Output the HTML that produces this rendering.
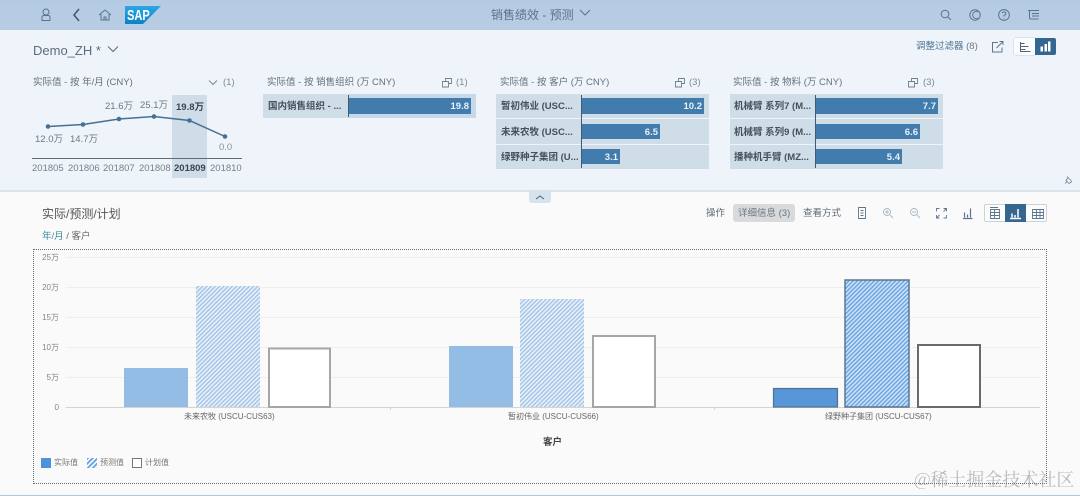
<!DOCTYPE html>
<html><head><meta charset="utf-8">
<style>
html,body{margin:0;padding:0}
body{width:1080px;height:496px;overflow:hidden;position:relative;background:#fafafa;font-family:"Liberation Sans","Noto Sans CJK SC",sans-serif;color:#555;filter:blur(.3px)}
.a{position:absolute;white-space:nowrap;line-height:1}
.r{position:absolute;}
.lbl{position:absolute;font-size:9.5px;font-weight:bold;color:#45505b;white-space:nowrap;line-height:12px}
.val{position:absolute;font-size:9.5px;font-weight:bold;color:#e8f0f8;line-height:12px;text-align:right}
.bar{position:absolute;background:#427cac}
.row{position:absolute;background:#cfdde9}
.t{position:absolute;font-size:9.5px;color:#66717c;white-space:nowrap;line-height:12px}
.yl{position:absolute;font-size:8px;color:#858585;text-align:right;width:26px;left:33px;line-height:10px}
svg{position:absolute;overflow:visible}
</style></head><body>

<!-- shell header -->
<div class="r" style="left:0;top:0;width:1080px;height:30px;background:linear-gradient(#b5cbe4,#b8cde3)"></div>
<svg style="left:0;top:0" width="1080" height="30" fill="none" stroke="#5a7391" stroke-width="1">
  <circle cx="46" cy="12" r="3"/><path d="M42 20.500v-3q0-2 2-2h4q2 0 2 2v3z"/>
  <path d="M79 9l-5 6 5 6" stroke-width="1.500" stroke="#40566e"/>
  <path d="M99 15l6-5 6 5M101 14v6h8v-6M104 20v-3h2v3"/>
  <path d="M580 10l5 5 5-5"/>
  <circle cx="945" cy="14" r="3.800"/><path d="M948 17l3 3"/>
  <circle cx="975" cy="15" r="5.200"/><path d="M978 12a3.500 3.500 0 1 0 0 6"/>
  <circle cx="1004" cy="15" r="5.400"/><path d="M1002 13q2-2 3.500-.500t-1.500 3v1M1004 18.500v.8"/>
  <path d="M1028 10.500h11M1029.500 10.500v8.500M1032 13.500h7M1032 16h7M1029.500 19h9"/>
</svg>
<svg style="left:125px;top:6px" width="37" height="19"><defs><linearGradient id="sg" x1="0" y1="0" x2="0" y2="1"><stop offset="0" stop-color="#2aa7e4"/><stop offset="1" stop-color="#0a82c8"/></linearGradient></defs><path d="M0 0H36L18 18H0z" fill="url(#sg)"/></svg>
<div class="a" style="left:127px;top:8px;font-size:15px;font-weight:bold;color:#fff;transform:scaleX(.74);transform-origin:left top">SAP</div>
<div class="a" style="left:491px;top:9px;font-size:12px;color:#5e7187">销售绩效 - 预测</div>

<!-- filter area -->
<div class="r" style="left:0;top:30px;width:1080px;height:160px;background:#eef4f9"></div>
<div class="r" style="left:0;top:190px;width:1080px;height:2px;background:#d9e4ed"></div>
<div class="a" style="left:33px;top:44px;font-size:13px;color:#5a6d80">Demo_ZH *</div>
<svg style="left:0;top:0" width="1080" height="190" fill="none" stroke="#5a6d80">
  <path d="M108 46.500l5 5 5-5"/>
  <path d="M209 80.500l4 4 4-4" stroke="#7d8a96"/>
  <g stroke="#6f8090" stroke-width=".9">
    <path d="M442.500 81.500h6v5.500h-6zM445.500 81v-2.500h6v5h-3"/>
    <path d="M675.500 81.500h6v5.500h-6zM678.500 81v-2.500h6v5h-3"/>
    <path d="M908.500 81.500h6v5.500h-6zM911.500 81v-2.500h6v5h-3"/>
  </g>
  <path d="M998 42.500h-5.500v9.500h9.500v-4.500M996.500 48l6.500-6.500M999.500 41.500h3.500v3.500" stroke="#5d7690"/>
  <path d="M1065 183.500l2.500-2.500M1067 176.500l4.500 4.500M1068 177.500l-2 3 3 3 3-2" stroke="#6f8090" stroke-width=".8"/>
</svg>
<div class="a" style="left:916px;top:41px;font-size:9.500px;line-height:10px;margin-top:1px;color:#4f7394">调整过滤器 <span style="color:#6c7a87">(8)</span></div>
<div class="r" style="left:1014px;top:38px;width:21px;height:17px;background:#fbfcfd;box-sizing:border-box;border-radius:2px 0 0 2px;box-shadow:0 0 0 .5px #c5d2de"></div>
<div class="r" style="left:1035px;top:38px;width:21px;height:17px;background:#356690;border-radius:0 2px 2px 0"></div>
<svg style="left:1014px;top:38px" width="42" height="17" fill="none" stroke="#4f6478">
  <path d="M6.500 4v9.500h10M6.500 5.500h4M6.500 8.500h8M6.500 11.500h5"/>
  <path d="M26.500 8.500h2.500v5h-2.500zM30.500 6h2.500v7.500h-2.500zM34 3.500h2.500v10H34z" fill="#fff" stroke="none"/>
</svg>

<!-- card 1 -->
<div class="t" style="left:33px;top:77px">实际值 - 按 年/月 (CNY)</div>
<div class="t" style="left:223px;top:77px;color:#7d8a96">(1)</div>
<div class="r" style="left:172px;top:95px;width:35px;height:83px;background:#cfdde9"></div>
<div class="r" style="left:32px;top:158px;width:210px;height:1px;background:#5f6b76"></div>
<svg style="left:0;top:0" width="260" height="180" fill="#467095" stroke="none">
  <path d="M48 126.500L83 124.500L119 119L154 116.500L189.500 120.500L225 136.500" fill="none" stroke="#467095" stroke-width="1.500"/>
  <circle cx="48" cy="126.500" r="2.300"/><circle cx="83" cy="124.500" r="2.300"/><circle cx="119" cy="119" r="2.300"/><circle cx="154" cy="116.500" r="2.300"/><circle cx="189.500" cy="120.500" r="2.300"/><circle cx="225" cy="136.500" r="2.300"/>
</svg>
<div class="t" style="left:35px;top:134px;color:#6d7884">12.0万</div>
<div class="t" style="left:70px;top:134px;color:#6d7884">14.7万</div>
<div class="t" style="left:105px;top:101px;color:#6d7884">21.6万</div>
<div class="t" style="left:140px;top:100px;color:#6d7884">25.1万</div>
<div class="t" style="left:176px;top:102px;font-weight:bold;color:#3b4650">19.8万</div>
<div class="t" style="left:219px;top:142px;color:#8a949e">0.0</div>
<div class="t" style="left:32px;top:163px;color:#76818c">201805</div>
<div class="t" style="left:68px;top:163px;color:#76818c">201806</div>
<div class="t" style="left:103px;top:163px;color:#76818c">201807</div>
<div class="t" style="left:139px;top:163px;color:#76818c">201808</div>
<div class="t" style="left:174px;top:163px;font-weight:bold;color:#3b4650">201809</div>
<div class="t" style="left:210px;top:163px;color:#76818c">201810</div>

<!-- card 2 -->
<div class="t" style="left:267px;top:77px">实际值 - 按 销售组织 (万 CNY)</div>
<div class="t" style="left:456px;top:77px;color:#7d8a96">(1)</div>
<div class="row" style="left:263px;top:94px;width:213px;height:24px"></div>
<div class="r" style="left:348px;top:94px;width:128px;height:24px;background:#c6d9ea"></div>
<div class="lbl" style="left:268px;top:101px">国内销售组织 - ...</div>
<div class="r" style="left:348px;top:95px;width:1px;height:22px;background:#3f5a75"></div>
<div class="bar" style="left:349px;top:98px;width:122px;height:16px"></div>
<div class="val" style="left:400px;top:101px;width:69px">19.8</div>

<!-- card 3 -->
<div class="t" style="left:500px;top:77px">实际值 - 按 客户 (万 CNY)</div>
<div class="t" style="left:689px;top:77px;color:#7d8a96">(3)</div>
<div class="row" style="left:496px;top:94px;width:213px;height:24px"></div>
<div class="row" style="left:496px;top:119px;width:213px;height:25px"></div>
<div class="row" style="left:496px;top:145px;width:213px;height:24px"></div>
<div class="r" style="left:581px;top:95px;width:1px;height:73px;background:#3f5a75"></div>
<div class="lbl" style="left:501px;top:101px">暂初伟业 (USC...</div>
<div class="lbl" style="left:501px;top:127px">未来农牧 (USC...</div>
<div class="lbl" style="left:501px;top:152px">绿野种子集团 (U...</div>
<div class="bar" style="left:582px;top:98px;width:122px;height:16px"></div>
<div class="bar" style="left:582px;top:124px;width:78px;height:15px"></div>
<div class="bar" style="left:582px;top:149px;width:38px;height:15px"></div>
<div class="val" style="left:640px;top:101px;width:62px">10.2</div>
<div class="val" style="left:620px;top:127px;width:38px">6.5</div>
<div class="val" style="left:590px;top:152px;width:28px">3.1</div>

<!-- card 4 -->
<div class="t" style="left:733px;top:77px">实际值 - 按 物料 (万 CNY)</div>
<div class="t" style="left:923px;top:77px;color:#7d8a96">(3)</div>
<div class="row" style="left:730px;top:94px;width:213px;height:24px"></div>
<div class="row" style="left:730px;top:119px;width:213px;height:25px"></div>
<div class="row" style="left:730px;top:145px;width:213px;height:24px"></div>
<div class="r" style="left:815px;top:95px;width:1px;height:73px;background:#3f5a75"></div>
<div class="lbl" style="left:734px;top:101px">机械臂 系列7 (M...</div>
<div class="lbl" style="left:734px;top:127px">机械臂 系列9 (M...</div>
<div class="lbl" style="left:734px;top:152px">播种机手臂 (MZ...</div>
<div class="bar" style="left:816px;top:98px;width:122px;height:16px"></div>
<div class="bar" style="left:816px;top:124px;width:104px;height:15px"></div>
<div class="bar" style="left:816px;top:149px;width:86px;height:15px"></div>
<div class="val" style="left:900px;top:101px;width:36px">7.7</div>
<div class="val" style="left:880px;top:127px;width:38px">6.6</div>
<div class="val" style="left:860px;top:152px;width:40px">5.4</div>

<!-- collapse handle -->
<div class="r" style="left:529px;top:191px;width:22px;height:12px;background:#d6e2ec;border-radius:0 0 3px 3px"></div>
<svg style="left:529px;top:191px" width="22" height="12" fill="none" stroke="#4f6478"><path d="M7 8l4-3 4 3"/></svg>

<!-- chart header -->
<div class="a" style="left:42px;top:208px;font-size:12px;color:#555">实际/预测/计划</div>
<div class="a" style="left:42px;top:231px;font-size:9.500px;line-height:10px;margin-top:1px;color:#666"><span style="color:#3d8a9e">年/月</span> / 客户</div>
<div class="a" style="left:706px;top:209px;font-size:9.500px;line-height:10px;color:#5f6b76">操作</div>
<div class="r" style="left:733px;top:204px;width:62px;height:18px;background:#d8dadc;border-radius:3px"></div>
<div class="a" style="left:738px;top:209px;font-size:9.500px;line-height:10px;color:#6b7680">详细信息 (3)</div>
<div class="a" style="left:803px;top:209px;font-size:9.500px;line-height:10px;color:#5f6b76">查看方式</div>
<svg style="left:0;top:0" width="1080" height="230" fill="none" stroke="#5d7690" stroke-width=".9">
  <path d="M858.500 207.500h7v11h-7zM860.500 210.500h3M860.500 213h3M860.500 215.500h3"/>
  <g stroke="#a9b6c2"><circle cx="887" cy="212" r="3.500"/><path d="M890 215l3 3M885 212h4M887 210v4"/><circle cx="914" cy="212" r="3.500"/><path d="M917 215l3 3M912 212h4"/></g>
  <path d="M936.500 211.500v-3h3M943.500 208.500h3v3M946.500 215v3h-3M939.500 218h-3v-3M937 217.500l2.500-2.500M946 209l-2.500 2.500"/>
  <path d="M963 218.500h9.500M964.500 212.500v5M967.500 214.500v3M970.500 208.500v9" stroke-width="1.200"/>
</svg>
<div class="r" style="left:984px;top:204px;width:63px;height:18px;box-sizing:border-box;border:1px solid #c9d2da;background:#fcfcfc;border-radius:2px"></div>
<div class="r" style="left:1005px;top:204px;width:21px;height:18px;background:#356690"></div>
<svg style="left:984px;top:204px" width="63" height="18" fill="none" stroke="#5d7690" stroke-width=".9">
  <path d="M6 3.500h8M6.500 5.500h9v9h-9zM6.500 8.500h9M6.500 11.500h9M10.500 5.500v9"/>
  <path d="M26 14.500h11M28 13.500v-4M31 13.500v-2.500M34 13.500V5" stroke="#fff" stroke-width="1.500"/>
  <path d="M48.500 5.500h11v9h-11zM48.500 8.500h11M48.500 11.500h11M52.500 5.500v9M56 5.500v9"/>
</svg>

<!-- chart -->
<div class="r" style="left:33px;top:249px;width:1014px;height:235px;box-sizing:border-box;border:1px dotted #6a6a6a"></div>
<div class="yl" style="top:253px">25万</div>
<div class="yl" style="top:283px">20万</div>
<div class="yl" style="top:313px">15万</div>
<div class="yl" style="top:343px">10万</div>
<div class="yl" style="top:373px">5万</div>
<div class="yl" style="top:403px">0</div>
<svg style="left:0;top:0" width="1080" height="496">
  <defs>
    <pattern id="hl" width="3" height="3" patternUnits="userSpaceOnUse" patternTransform="rotate(45)"><rect width="3" height="3" fill="#eaf1f9"/><rect width="1.500" height="3" fill="#a6c6e8"/></pattern>
    <pattern id="hd" width="3" height="3" patternUnits="userSpaceOnUse" patternTransform="rotate(45)"><rect width="3" height="3" fill="#dbe9f8"/><rect width="1.700" height="3" fill="#6fa8e4"/></pattern>
    <pattern id="hs" width="3.500" height="3.500" patternUnits="userSpaceOnUse" patternTransform="rotate(45)"><rect width="3.500" height="3.500" fill="#fff"/><rect width="2" height="3.500" fill="#6ba6e2"/></pattern>
  </defs>
  <g fill="#eeeeee">
    <rect x="66" y="257" width="974" height="1"/><rect x="66" y="287" width="974" height="1"/><rect x="66" y="317" width="974" height="1"/><rect x="66" y="347" width="974" height="1"/><rect x="66" y="377" width="974" height="1"/>
  </g>
  <rect x="66" y="407" width="974" height="1" fill="#d4d4d4"/>
  <rect x="390" y="407" width="1" height="3" fill="#d4d4d4"/><rect x="714" y="407" width="1" height="3" fill="#d4d4d4"/>
  <!-- group 1 -->
  <rect x="124" y="368" width="64" height="39" fill="#94bde6"/>
  <rect x="196" y="286" width="64" height="121" fill="url(#hl)"/>
  <rect x="269" y="348.500" width="61" height="58.500" fill="#fff" stroke="#a6a6a6" stroke-width="2"/>
  <!-- group 2 -->
  <rect x="449" y="346" width="64" height="61" fill="#94bde6"/>
  <rect x="520" y="299" width="64" height="108" fill="url(#hl)"/>
  <rect x="593" y="336" width="62" height="71" fill="#fff" stroke="#a6a6a6" stroke-width="2"/>
  <!-- group 3 -->
  <rect x="773.500" y="388.500" width="64" height="18.500" fill="#5796d9" stroke="#56708a" stroke-width="1.200"/>
  <rect x="845" y="280" width="64" height="127" fill="url(#hd)" stroke="#5d7590" stroke-width="1.500"/>
  <rect x="918" y="345" width="62" height="62" fill="#fff" stroke="#6a6a6a" stroke-width="2"/>
  <!-- legend -->
  <rect x="41" y="458" width="10" height="10" fill="#4e92d9"/>
  <rect x="87" y="458" width="10" height="10" fill="url(#hs)"/>
  <rect x="132.500" y="458.500" width="9" height="9" fill="#fff" stroke="#777"/>
</svg>
<div class="a" style="left:184px;top:412px;font-size:8px;line-height:9px;color:#666">未来农牧 (USCU-CUS63)</div>
<div class="a" style="left:508px;top:412px;font-size:8px;line-height:9px;color:#666">暂初伟业 (USCU-CUS66)</div>
<div class="a" style="left:825px;top:412px;font-size:8px;line-height:9px;color:#666">绿野种子集团 (USCU-CUS67)</div>
<div class="a" style="left:543px;top:438px;font-size:9.500px;line-height:10px;font-weight:bold;color:#444">客户</div>
<div class="a" style="left:54px;top:459px;font-size:8px;color:#777">实际值</div>
<div class="a" style="left:100px;top:459px;font-size:8px;color:#777">预测值</div>
<div class="a" style="left:145px;top:459px;font-size:8px;color:#777">计划值</div>

<div class="r" style="left:0;top:495px;width:1080px;height:1px;background:#a8cde0"></div>
<div class="a" style="left:914px;top:470px;font-size:18px;color:rgba(120,120,120,.5);font-family:'Noto Serif CJK SC','Liberation Serif',serif">@稀土掘金技术社区</div>
</body></html>
